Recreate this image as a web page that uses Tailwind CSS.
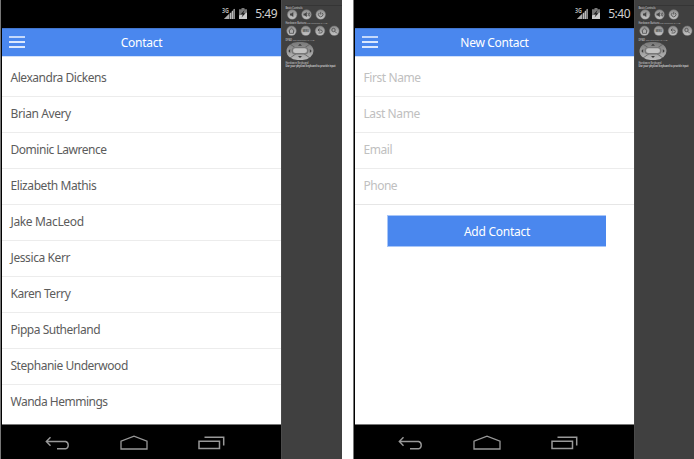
<!DOCTYPE html>
<html lang="en">
<head>
<meta charset="utf-8">
<title>Contacts</title>
<script src="https://cdn.jsdelivr.net/npm/@tailwindcss/browser@4"></script>
</head>
<body class="w-[694px] h-[459px] overflow-hidden bg-white font-['Noto_Sans','Open_Sans',sans-serif] text-[12px]">

<svg class="absolute w-0 h-0" aria-hidden="true">
  <defs>
    <linearGradient id="metal" x1="0" y1="0" x2="0" y2="1"><stop offset="0" stop-color="#8a8a8a"/><stop offset="1" stop-color="#c8c8c8"/></linearGradient>
    <linearGradient id="pad" x1="0" y1="0" x2="0" y2="1"><stop offset="0" stop-color="#777"/><stop offset="1" stop-color="#bcbcbc"/></linearGradient>
  </defs>
</svg>
<svg class="hidden" aria-hidden="true">
  <symbol id="status" viewBox="0 0 28 14">
    <text x="0" y="5.6" font-size="6.5" font-weight="700" fill="#aaa" textLength="7" lengthAdjust="spacingAndGlyphs">3G</text>
    <path d="M2 12 12.5 1.5V12z" fill="#555"/>
    <path d="M2 12 7 7V12z" fill="#aaa"/>
    <path d="M8 6h1.3v6H8zM10 4h1v8h-1zM11.7 2h1v10h-1z" fill="#bbb"/>
    <path d="M19.5 1h3v1.3H25V12h-8V2.300h2.500z" fill="#777"/>
    <path d="M17 8.500 25 5.500V12h-8z" fill="#ccc"/>
    <path d="m22.500 3-4 4.500h2.300L19.500 10.500l4-4.300h-2.300z" fill="#1c1c1c"/>
  </symbol>
  <symbol id="back" viewBox="0 0 26 14"><path d="M5.500 1.200 1.300 5.500l4.200 4.300M1.500 5.500H20.500a3.800 3.800 0 0 1 0 7.300H12" fill="none" stroke="#999" stroke-width="1.400"/></symbol>
  <symbol id="home" viewBox="0 0 28 15"><path d="M1 14V6.200L14 1.200 27 6.200V14z" fill="none" stroke="#999" stroke-width="1.300"/></symbol>
  <symbol id="recent" viewBox="0 0 27 14"><path d="M1 5.200h20.500v7.300H1zM6.500 1.300H25.700V9.500" fill="none" stroke="#999" stroke-width="1.500"/></symbol>
  <symbol id="emulator" viewBox="0 0 60 72">
    <path d="M3 5.500H60" stroke="#353535" stroke-width="1"/>
    <g font-size="2.500" fill="#aaa">
      <text x="3.500" y="8.500" font-weight="700" textLength="17" lengthAdjust="spacingAndGlyphs">Basic Controls</text>
      <text x="3.500" y="24.300" textLength="42" lengthAdjust="spacingAndGlyphs"><tspan font-weight="700">Hardware Buttons</tspan> not enabled in AVD</text>
      <text x="3.500" y="40.500" textLength="29" lengthAdjust="spacingAndGlyphs"><tspan font-weight="700">DPAD</tspan> not enabled in AVD</text>
      <text x="3.500" y="64.300" font-weight="700" textLength="23" lengthAdjust="spacingAndGlyphs">Hardware Keyboard</text>
      <text x="3.500" y="67.300" fill="#ccc" font-weight="700" textLength="50" lengthAdjust="spacingAndGlyphs">Use your physical keyboard to provide input</text>
    </g>
    <g fill="url(#metal)" stroke="#777" stroke-width=".5">
      <circle cx="10.200" cy="14.500" r="4.800"/><circle cx="24.500" cy="14.500" r="4.800"/><circle cx="38.700" cy="14.500" r="4.800"/>
      <circle cx="9.500" cy="30.800" r="4.800"/><circle cx="23.800" cy="30.800" r="4.800"/><circle cx="38" cy="30.800" r="4.800"/><circle cx="52.300" cy="30.800" r="4.800"/>
    </g>
    <g fill="#444">
      <path d="M8 13.500h1.300l2-1.500v5l-2-1.500H8z"/>
      <path d="M21.500 13.500h1.300l2-1.500v5l-2-1.500h-1.300z"/>
      <text x="20.700" y="31.700" font-size="2.500" font-weight="700" textLength="6.300" lengthAdjust="spacingAndGlyphs">MENU</text>
    </g>
    <g fill="none" stroke="#4a4a4a" stroke-width=".8">
      <path d="M26 13q1 1.500 0 3M27.300 12.500q1.300 2 0 4"/>
      <path d="M37.200 13a2.200 2.200 0 1 0 3 0M38.700 11.900v2.600"/>
      <path d="m6.500 31 3-2.800 3 2.800M7.500 30.500v2.800h4v-2.800"/>
      <path d="M37.500 28.500 36 30l1.500 1.500M36 30h2.800a1.500 1.500 0 0 1 0 3h-2.300"/>
      <circle cx="51.500" cy="30" r="1.700"/><path d="m52.800 31.300 2 2"/>
    </g>
    <rect x="4.500" y="42" width="27" height="18" rx="11" ry="9" fill="url(#pad)"/>
    <path d="m8 44 20 14M28 44 8 58" stroke="#555" stroke-width=".7"/>
    <rect x="9.500" y="47" width="17" height="7.500" rx="3.700" fill="#777"/>
    <rect x="11" y="48.300" width="14" height="4.800" rx="2.400" fill="#c2c2c2"/>
    <path d="m18 43.800 2 1.900h-4zM18 57.900l2-1.900h-4zM6.300 51l1.900-2v4zM29.700 51l-1.900-2v4z" fill="#3c3c3c"/>
  </symbol>
</svg>

<main class="flex h-full gap-[11px]">
  <section class="flex w-[342px] shrink-0">
    <div class="flex flex-col w-[281px] bg-black border-l border-[#777] pl-px">
      <div class="flex h-7 items-center justify-end pr-[4px]">
        <svg class="w-7 h-3.5 mr-[5px] -mt-px"><use href="#status"/></svg>
        <span class="text-[12px] tracking-[-0.5px] leading-[20px] text-[#d0d0d0]">5:49</span>
      </div>
      <header class="grid grid-cols-[1fr_auto_1fr] h-7 items-center bg-[#4a87ee] border-t border-[#4275cd] text-white">
        <div class="flex flex-col gap-[3px] w-4 ml-[7px] -mt-px"><i class="h-[2px] bg-[#c4d8fb]"></i><i class="h-[2px] bg-[#dce8fd]"></i><i class="h-[2px] bg-[#dce8fd]"></i></div>
        <h1 class="tracking-[-0.25px] pt-px">Contact</h1>
      </header>
      <ul class="flex-1 bg-white border-t border-[#d0e0fa] pt-[4px] text-[#5c5c5c]">
        <li class="h-9 border-b border-[#ececec] pl-[8.500px] leading-[33px] tracking-[-0.47px]">Alexandra Dickens</li>
        <li class="h-9 border-b border-[#ececec] pl-[8.500px] leading-[33px] tracking-[-0.4px]">Brian Avery</li>
        <li class="h-9 border-b border-[#ececec] pl-[8.500px] leading-[33px] tracking-[-0.47px]">Dominic Lawrence</li>
        <li class="h-9 border-b border-[#ececec] pl-[8.500px] leading-[33px] tracking-[-0.42px]">Elizabeth Mathis</li>
        <li class="h-9 border-b border-[#ececec] pl-[8.500px] leading-[33px] tracking-[-0.35px]">Jake MacLeod</li>
        <li class="h-9 border-b border-[#ececec] pl-[8.500px] leading-[33px] tracking-[-0.4px]">Jessica Kerr</li>
        <li class="h-9 border-b border-[#ececec] pl-[8.500px] leading-[33px] tracking-[-0.45px]">Karen Terry</li>
        <li class="h-9 border-b border-[#ececec] pl-[8.500px] leading-[33px] tracking-[-0.47px]">Pippa Sutherland</li>
        <li class="h-9 border-b border-[#ececec] pl-[8.500px] leading-[33px] tracking-[-0.47px]">Stephanie Underwood</li>
        <li class="h-9 pl-[8.500px] leading-[33px] tracking-[-0.5px]">Wanda Hemmings</li>
      </ul>
      <nav class="flex h-[35px] items-center border-t border-[#777] pl-[43px]">
        <svg class="w-[26px] h-3.5 mt-px"><use href="#back"/></svg>
        <svg class="w-7 h-[15px] ml-[49px]"><use href="#home"/></svg>
        <svg class="w-[27px] h-3.5 ml-[50px] mt-px"><use href="#recent"/></svg>
      </nav>
    </div>
    <aside class="w-[61px] bg-[#404040] border-l border-[#4a4a4a]"><svg class="w-[60px] h-[72px]"><use href="#emulator"/></svg></aside>
  </section>

  <section class="flex w-[341px] shrink-0">
    <div class="flex flex-col w-[281px] bg-black border-l border-[#777] pl-px">
      <div class="flex h-7 items-center justify-end pr-[4px]">
        <svg class="w-7 h-3.5 mr-[5px] -mt-px"><use href="#status"/></svg>
        <span class="text-[12px] tracking-[-0.5px] leading-[20px] text-[#d0d0d0]">5:40</span>
      </div>
      <header class="grid grid-cols-[1fr_auto_1fr] h-7 items-center bg-[#4a87ee] border-t border-[#4275cd] text-white">
        <div class="flex flex-col gap-[3px] w-4 ml-[7px] -mt-px"><i class="h-[2px] bg-[#c4d8fb]"></i><i class="h-[2px] bg-[#dce8fd]"></i><i class="h-[2px] bg-[#dce8fd]"></i></div>
        <h1 class="tracking-[-0.3px] pt-px">New Contact</h1>
      </header>
      <div class="flex-1 bg-white border-t border-[#d0e0fa] pt-[4px] text-[#c0c0c0]">
        <div class="h-9 border-b border-[#ececec] pl-[8.500px] leading-[33px] tracking-[-0.42px]">First Name</div>
        <div class="h-9 border-b border-[#ececec] pl-[8.500px] leading-[33px] tracking-[-0.42px]">Last Name</div>
        <div class="h-9 border-b border-[#ececec] pl-[8.500px] leading-[33px] tracking-[-0.42px]">Email</div>
        <div class="h-9 border-b border-[#e6e6e6] pl-[8.500px] leading-[33px] tracking-[-0.5px]">Phone</div>
        <button class="block w-[219px] h-8 mt-[10px] ml-8 pt-[2px] bg-[#4a87ee] border border-r-0 border-[#a8c6f8] text-white tracking-[-0.25px]">Add Contact</button>
      </div>
      <nav class="flex h-[35px] items-center border-t border-[#777] pl-[43px]">
        <svg class="w-[26px] h-3.5 mt-px"><use href="#back"/></svg>
        <svg class="w-7 h-[15px] ml-[49px]"><use href="#home"/></svg>
        <svg class="w-[27px] h-3.5 ml-[50px] mt-px"><use href="#recent"/></svg>
      </nav>
    </div>
    <aside class="w-[60px] bg-[#404040] border-l border-[#4a4a4a]"><svg class="w-[60px] h-[72px]"><use href="#emulator"/></svg></aside>
  </section>
</main>
</body>
</html>
